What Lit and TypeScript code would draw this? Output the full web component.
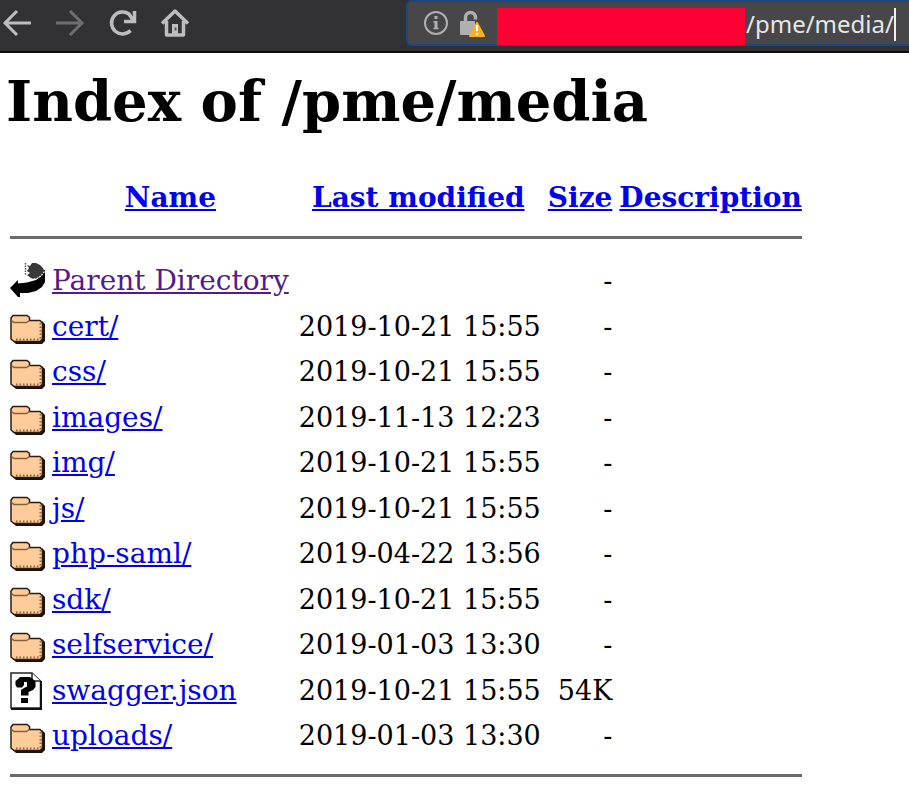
import { LitElement, html, css, svg, nothing } from "lit";
import { customElement } from "lit/decorators.js";

type Kind = "parent" | "folder" | "unknown";
interface Entry {
  kind: Kind;
  name: string;
  modified: string;
  size: string;
}

const STAMP = "2019-10-21 15:55";

const ENTRIES: Entry[] = [
  { kind: "parent", name: "Parent Directory", modified: "", size: "-" },
  { kind: "folder", name: "cert/", modified: STAMP, size: "-" },
  { kind: "folder", name: "css/", modified: STAMP, size: "-" },
  { kind: "folder", name: "images/", modified: "2019-11-13 12:23", size: "-" },
  { kind: "folder", name: "img/", modified: STAMP, size: "-" },
  { kind: "folder", name: "js/", modified: STAMP, size: "-" },
  { kind: "folder", name: "php-saml/", modified: "2019-04-22 13:56", size: "-" },
  { kind: "folder", name: "sdk/", modified: STAMP, size: "-" },
  { kind: "folder", name: "selfservice/", modified: "2019-01-03 13:30", size: "-" },
  { kind: "unknown", name: "swagger.json", modified: STAMP, size: "54K" },
  { kind: "folder", name: "uploads/", modified: "2019-01-03 13:30", size: "-" },
];

const GLYPHS = {
  parent: svg`
    <path d="M17 3L20 4L22 1H26L30 3L33 6L34.500 10L31 14L26 17H22L17 13L20 11L17 9L19 6Z" fill="#383838"/>
    <path d="M15.500 1V13" stroke="#555" stroke-width="1.500" stroke-dasharray="1.500 1"/>
    <path d="M0 26L8 18V21.500L17 20.500L26 18L31 14L34 8H35V20L32 25L26 29L18 31H10V35H8Z" fill="#000"/>
    <path d="M18 15L22 17H26L31 14L34.500 9.500" fill="none" stroke="#eee" stroke-width="1.300" stroke-dasharray="2 1"/>`,
  folder: svg`
    <path d="M3 33H30L32 31V13L35 16V33L32 36H6Z" fill="#1c120a"/>
    <path d="M1 10L3 7.500H17L19.500 9.500V12.500H30L32.500 15V31L30 33.500H4L1 31Z" fill="#ffcc99" stroke="#2a1c12" stroke-width="1.500"/>
    <path d="M1.500 12.500L4 14.500H16.500L19.500 12.500" fill="none" stroke="#80603f" stroke-width="1.300"/>
    <path d="M6 31.500H30" stroke="#8a6444" stroke-width="2" stroke-dasharray="1.500 2"/>
    <path d="M30.500 15V31" stroke="#8a6444" stroke-width="2" stroke-dasharray="1.500 2"/>`,
  unknown: svg`
    <path d="M1 1H22L30.500 9V36H1Z" fill="#fff" stroke="#222" stroke-width="1.500"/>
    <path d="M1 37H31V9" fill="none" stroke="#111" stroke-width="2"/>
    <path d="M22 1V9H30.500" fill="#fff" stroke="#222" stroke-width="1.500"/>
    <path d="M10 5H20L24 8L25.500 10V15L23 18L18.500 20V23.500H11V18L14 16L17 14.500V10H14V13L12 15.500H7L5.500 13V9L8 7Z" fill="#000"/>
    <path d="M11 26H18V31H11Z" fill="#000"/>`,
};

@customElement("browser-bar")
export class BrowserBar extends LitElement {
  static styles = css`
    :host {
      display: flex;
      height: 53px;
      box-sizing: border-box;
      background: #323234;
      border-bottom: 2px solid #0c0c0d;
      overflow: hidden;
    }
    nav {
      display: flex;
      flex: 0 0 406px;
      gap: 21px;
      padding-top: 7px;
      padding-left: 1px;
      box-sizing: border-box;
    }
    button {
      width: 32px;
      height: 32px;
      padding: 0;
      border: 0;
      background: none;
      color: #bdbdbe;
    }
    button:disabled {
      color: #6e6e70;
    }
    svg {
      display: block;
      fill: none;
      stroke: currentColor;
      stroke-width: 3;
    }
    .address {
      display: flex;
      flex: 1;
      min-width: 0;
      height: 46px;
      box-sizing: border-box;
      border: 2px solid #1b4782;
      border-right: 0;
      border-radius: 6px 0 0 6px;
      background: #474749;
      padding-left: 14px;
    }
    .status {
      flex: 0 0 75px;
      color: #b0b0b1;
    }
    .redacted {
      flex: 0 0 248px;
      height: 37px;
      margin-top: 6px;
      background: #ff0035;
    }
    .field {
      flex: 0 0 149px;
      width: 149px;
      height: 42px;
      box-sizing: border-box;
      padding: 0 0 0 1px;
      border: 0;
      outline: 0;
      background: none;
      color: #e6e6e6;
      font: 24px "Noto Sans", sans-serif;
    }
    .caret {
      flex: 0 0 2px;
      height: 33px;
      margin-top: 6px;
      background: #f0f0f0;
    }
  `;

  render() {
    return html`
      <nav aria-label="Navigation">
        <button aria-label="Back">
          <svg width="32" height="32" viewBox="0 0 32 32"><path d="M30 16H4M16 4L4 16L16 28"/></svg>
        </button>
        <button aria-label="Forward" disabled>
          <svg width="32" height="32" viewBox="0 0 32 32"><path d="M2 16H28M16 4L28 16L16 28"/></svg>
        </button>
        <button aria-label="Reload">
          <svg width="32" height="32" viewBox="0 0 32 32">
            <path d="M23.500 23.500A11 11 0 1 1 22 7L26 13" stroke-width="3.500" />
            <path d="M27.500 4V14.500H17" stroke-width="3.500" />
          </svg>
        </button>
        <button aria-label="Home">
          <svg width="32" height="32" viewBox="0 0 32 32">
            <path d="M2 16.500L15 4L28 16.500M6.500 14V28H23.500V14" stroke-width="3.500" stroke-linejoin="round" />
            <path d="M12 17H18V28H12Z" fill="currentColor" stroke="none" />
            <path d="M15.500 20.500V23.500" stroke="#555" stroke-width="2" />
          </svg>
        </button>
      </nav>
      <div class="address">
        <svg class="status" width="75" height="42" viewBox="0 0 75 42">
          <circle cx="14" cy="21" r="11" stroke-width="2" />
          <path d="M14 14V17M14 19V27" />
          <path d="M11.500 20H14M11.500 26.500H16.500" stroke-width="1.500" />
          <path d="M43.500 20V15.500A5 5 0 0 1 53.500 15.500V17.500" stroke-width="3.500" />
          <rect x="38" y="19" width="15" height="14" rx="1" fill="currentColor" stroke="none" />
          <path d="M55 21L62 34H48Z" fill="#fdb022" stroke="#fdb022" stroke-width="2" stroke-linejoin="round" />
          <path d="M55 23V29M55 31V33" stroke="#fff" stroke-width="2" />
        </svg>
        <span class="redacted"></span>
        <input class="field" aria-label="Address" value="/pme/media/" />
        <span class="caret"></span>
      </div>
    `;
  }
}

@customElement("app-root")
export class AppRoot extends LitElement {
  static styles = css`
    :host {
      display: block;
      min-height: 100vh;
      background: #fff;
      color: #000;
      font: 28px/32px "DejaVu Serif", serif;
    }
    h1 {
      margin: 15px 6px 48px;
      font-size: 56px;
      line-height: 66px;
    }
    table {
      margin-left: 3px;
      border-spacing: 7px 0;
    }
    th,
    td {
      padding: 0;
      white-space: nowrap;
    }
    thead th {
      padding-bottom: 22px;
    }
    .modified {
      min-width: 245px;
    }
    a {
      color: #0000ee;
    }
    .visited {
      color: #551a8b;
    }
    hr {
      margin: 0 0 19px;
      border: 0;
      height: 3px;
      background: #6a6a6a;
    }
    .closing {
      margin: 15px 0 0;
    }
    .entry td {
      height: 45px;
    }
    .entry:nth-child(even) td {
      height: 46px;
    }
    .entry .end {
      font-size: 27px;
      text-align: right;
    }
    svg {
      display: block;
    }
  `;

  render() {
    return html`
      <browser-bar></browser-bar>
      <h1>Index of /pme/media</h1>
      <table>
        <thead>
          <tr>
            <th></th>
            <th><a href="#name">Name</a></th>
            <th class="modified"><a href="#modified">Last modified</a></th>
            <th><a href="#size">Size</a></th>
            <th><a href="#description">Description</a></th>
          </tr>
        </thead>
        <tbody>
          <tr><td colspan="5"><hr /></td></tr>
          ${ENTRIES.map(
            (e) => html`<tr class="entry">
              <td><svg width="35" height="38" viewBox="0 0 35 38">${GLYPHS[e.kind]}</svg></td>
              <td><a class=${e.kind === "parent" ? "visited" : nothing} href="#">${e.name}</a></td>
              <td class="end">${e.modified}</td>
              <td class="end">${e.size}</td>
              <td></td>
            </tr>`
          )}
          <tr><td colspan="5"><hr class="closing" /></td></tr>
        </tbody>
      </table>
    `;
  }
}
